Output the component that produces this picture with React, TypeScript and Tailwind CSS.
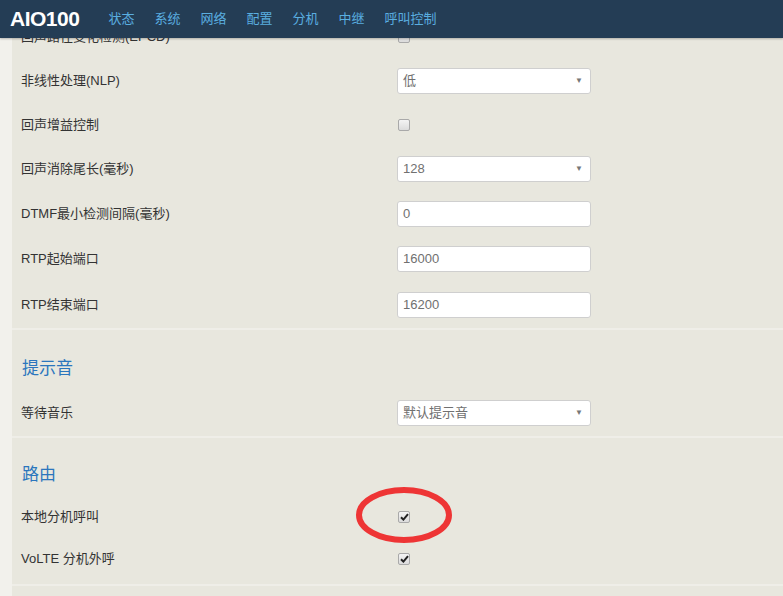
import React from 'react';

const navItems = ['状态', '系统', '网络', '配置', '分机', '中继', '呼叫控制'];

const Checkbox: React.FC<{ checked?: boolean }> = ({ checked }) => (
  <span className="flex h-[12px] w-[12px] items-center justify-center rounded-[2px] border border-[#a9a9a9] bg-gradient-to-b from-[#f4f4f4] to-[#dcdcdc]">
    {checked && (
      <svg width="9" height="8" viewBox="0 0 9 8">
        <path d="M1 4.2 L3.4 6.6 L8 1.2" fill="none" stroke="#222" strokeWidth="2" />
      </svg>
    )}
  </span>
);

const Field: React.FC<{ value: string; select?: boolean }> = ({ value, select }) => (
  <div className="flex h-[26px] w-[194px] items-center justify-between rounded-[3px] border border-[#cfcfcf] bg-white pl-[5px] pr-[7px] text-[13px] text-[#707070]">
    <span>{value}</span>
    {select && <span className="text-[8px] text-[#777]">▼</span>}
  </div>
);

const Row: React.FC<{ label: string; h: string; children: React.ReactNode }> = ({ label, h, children }) => (
  <div className={`flex items-center pl-[9px] ${h}`}>
    <div className="w-[376px] text-[13px] text-[#333]">{label}</div>
    {children}
  </div>
);

const Divider = () => <div className="h-[2px] bg-[#efeee8]" />;

const App: React.FC = () => {
  return (
    <div
      className="relative h-[596px] w-[783px] overflow-hidden bg-[#f2f1ec]"
      style={{ fontFamily: '"Liberation Sans", "Noto Sans CJK SC", sans-serif' }}
    >
      <div className="absolute inset-x-0 top-0 z-10 flex h-[38px] items-center bg-[#243d55] pl-[10px] shadow-[0_1px_2px_rgba(0,0,0,0.25)]">
        <span className="mr-[29px] text-[21px] font-bold tracking-[-0.5px] text-white">AIO100</span>
        <div className="flex gap-[20px] text-[13px] text-[#5aaee0]">
          {navItems.map((item) => (
            <span key={item}>{item}</span>
          ))}
        </div>
      </div>

      <div className="ml-[12px] h-full bg-[#e8e7de] pt-[15px]">
        <Row label="回声路径变化检测(EPCD)" h="h-[44px]">
          <span className="ml-[1px]">
            <Checkbox />
          </span>
        </Row>
        <Row label="非线性处理(NLP)" h="h-[44px]">
          <Field value="低" select />
        </Row>
        <Row label="回声增益控制" h="h-[44px]">
          <span className="ml-[1px]">
            <Checkbox />
          </span>
        </Row>
        <Row label="回声消除尾长(毫秒)" h="h-[44px]">
          <Field value="128" select />
        </Row>
        <Row label="DTMF最小检测间隔(毫秒)" h="h-[45px]">
          <Field value="0" />
        </Row>
        <Row label="RTP起始端口" h="h-[46px]">
          <Field value="16000" />
        </Row>
        <Row label="RTP结束端口" h="h-[46px]">
          <Field value="16200" />
        </Row>
        <Divider />

        <div className="flex h-[59px] items-end pb-[8px] pl-[10px] text-[17px] text-[#2b76bd]">提示音</div>
        <Row label="等待音乐" h="h-[47px]">
          <Field value="默认提示音" select />
        </Row>
        <Divider />

        <div className="flex h-[57px] items-end pb-[8px] pl-[10px] text-[17px] text-[#2b76bd]">路由</div>
        <Row label="本地分机呼叫" h="h-[44px]">
          <span className="ml-[1px]">
            <Checkbox checked />
          </span>
        </Row>
        <Row label="VoLTE 分机外呼" h="h-[40px]">
          <span className="ml-[1px]">
            <Checkbox checked />
          </span>
        </Row>
        <div className="mt-[5px]">
          <Divider />
        </div>
      </div>

      <svg className="pointer-events-none absolute left-[354px] top-[485px]" width="100" height="60" viewBox="0 0 100 60">
        <ellipse cx="50" cy="30" rx="45" ry="25" fill="none" stroke="#ee3535" strokeWidth="6" />
      </svg>
    </div>
  );
};

export default App;
